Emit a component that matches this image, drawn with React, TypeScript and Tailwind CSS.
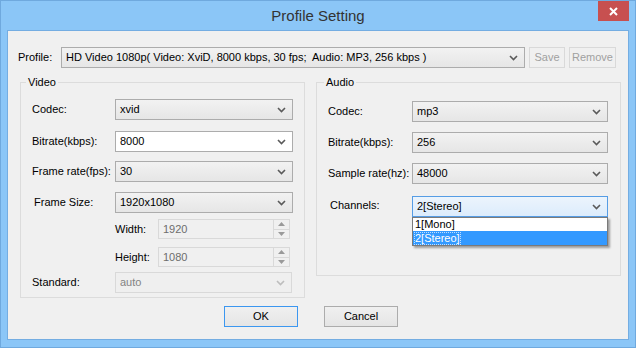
import React from 'react';

const font = { fontFamily: '"Liberation Sans", Arial, sans-serif' };

const Chevron: React.FC<{ color?: string }> = ({ color = '#5a5a5a' }) => (
  <svg width="9" height="6" viewBox="0 0 9 6">
    <path d="M1 1 L4.5 4.5 L8 1" fill="none" stroke={color} strokeWidth="1.6" />
  </svg>
);

type Variant = 'list' | 'edit' | 'disabled' | 'focus';

const Combo: React.FC<{ value: string; variant?: Variant; className?: string }> = ({
  value,
  variant = 'list',
  className = '',
}) => {
  const styles: Record<Variant, string> = {
    list: 'border-[#acacac] bg-gradient-to-b from-[#f2f2f2] to-[#e6e6e6] text-black',
    edit: 'border-[#acacac] bg-white text-black',
    disabled: 'border-[#d9d9d9] bg-[#efefef] text-[#838383]',
    focus: 'border-[#569de5] bg-gradient-to-b from-[#ecf4fc] to-[#dcecfc] text-black',
  };
  return (
    <div className={`flex items-center justify-between border pl-[4px] pr-[6px] ${styles[variant]} ${className}`}>
      <span className="whitespace-pre text-[11px] leading-none">{value}</span>
      <Chevron color={variant === 'disabled' ? '#bdbdbd' : '#5a5a5a'} />
    </div>
  );
};

const Spin: React.FC<{ value: string }> = ({ value }) => (
  <div className="flex h-[20px] w-[132px] items-stretch border border-[#d9d9d9] bg-[#f0f0f0]">
    <span className="flex flex-1 items-center pl-[4px] text-[11px] leading-none text-[#6d6d6d]">{value}</span>
    <div className="flex w-[16px] flex-col border-l border-[#d9d9d9]">
      <div className="flex flex-1 items-center justify-center border-b border-[#d9d9d9]">
        <svg width="7" height="4" viewBox="0 0 7 4">
          <path d="M0 4 L3.5 0 L7 4 Z" fill="#9a9a9a" />
        </svg>
      </div>
      <div className="flex flex-1 items-center justify-center">
        <svg width="7" height="4" viewBox="0 0 7 4">
          <path d="M0 0 L3.5 4 L7 0 Z" fill="#9a9a9a" />
        </svg>
      </div>
    </div>
  </div>
);

const Label: React.FC<{ children: React.ReactNode; className?: string }> = ({ children, className = '' }) => (
  <span className={`text-[11px] leading-none text-black ${className}`}>{children}</span>
);

export default function App() {
  return (
    <div className="flex h-[348px] w-[636px] flex-col border border-[#6fa9de] bg-[#8bc6f7]" style={font}>
      {/* title bar */}
      <div className="relative flex h-[29px] shrink-0 items-center justify-center">
        <span className="text-[15px] text-[#333] pt-[2px]">Profile Setting</span>
        <div className="absolute right-[6px] top-0 flex h-[20px] w-[31px] items-center justify-center bg-[#c75050]">
          <svg width="9" height="9" viewBox="0 0 9 9">
            <path d="M1 1 L8 8 M8 1 L1 8" stroke="#fff" strokeWidth="2" />
          </svg>
        </div>
      </div>

      {/* client area */}
      <div className="mx-[6px] flex h-[310px] flex-col border border-[#74ade2] bg-[#f0f0f0]">
        {/* profile row */}
        <div className="mt-[16px] flex h-[21px] items-center">
          <Label className="ml-[10px] w-[43px]">Profile:</Label>
          <Combo
            variant="list"
            className="h-[21px] w-[464px]"
            value="HD Video 1080p( Video: XviD, 8000 kbps, 30 fps;  Audio: MP3, 256 kbps )"
          />
          <div className="ml-[4px] flex h-[21px] w-[36px] items-center justify-center border border-[#d9d9d9] text-[11px] text-[#a0a0a0]">
            Save
          </div>
          <div className="ml-[4px] flex h-[21px] w-[47px] items-center justify-center border border-[#d9d9d9] text-[11px] text-[#a0a0a0]">
            Remove
          </div>
        </div>

        {/* groups */}
        <div className="mt-[7px] flex items-start gap-[11px] pl-[12px]">
          <fieldset className="h-[223px] w-[283px] border border-[#dcdcdc] px-[11px] pt-[10px]">
            <legend className="-ml-[6px] px-[2px] text-[11px] leading-[14px] text-black">Video</legend>
            <div className="flex h-[21px] items-center">
              <Label className="w-[83px]">Codec:</Label>
              <Combo value="xvid" className="h-[21px] w-[178px]" />
            </div>
            <div className="mt-[11px] flex h-[21px] items-center">
              <Label className="w-[83px]">Bitrate(kbps):</Label>
              <Combo value="8000" variant="edit" className="h-[21px] w-[178px]" />
            </div>
            <div className="mt-[9px] flex h-[21px] items-center">
              <Label className="w-[83px]">Frame rate(fps):</Label>
              <Combo value="30" className="h-[21px] w-[178px]" />
            </div>
            <div className="mt-[10px] flex h-[21px] items-center">
              <Label className="w-[83px] pl-[2px]">Frame Size:</Label>
              <Combo value="1920x1080" className="h-[21px] w-[178px]" />
            </div>
            <div className="mt-[6px] flex h-[20px] items-center pl-[83px]">
              <Label className="w-[43px]">Width:</Label>
              <Spin value="1920" />
            </div>
            <div className="mt-[8px] flex h-[20px] items-center pl-[83px]">
              <Label className="w-[43px]">Height:</Label>
              <Spin value="1080" />
            </div>
            <div className="mt-[5px] flex h-[21px] items-center">
              <Label className="w-[83px]">Standard:</Label>
              <Combo value="auto" variant="disabled" className="h-[21px] w-[177px]" />
            </div>
          </fieldset>

          <fieldset className="h-[201px] w-[305px] border border-[#dcdcdc] px-[11px] pt-[12px]">
            <legend className="-ml-[4px] px-[2px] text-[11px] leading-[14px] text-black">Audio</legend>
            <div className="flex h-[21px] items-center">
              <Label className="w-[84px]">Codec:</Label>
              <Combo value="mp3" className="h-[21px] w-[196px]" />
            </div>
            <div className="mt-[10px] flex h-[21px] items-center">
              <Label className="w-[84px]">Bitrate(kbps):</Label>
              <Combo value="256" className="h-[21px] w-[196px]" />
            </div>
            <div className="mt-[10px] flex h-[21px] items-center">
              <Label className="w-[84px]">Sample rate(hz):</Label>
              <Combo value="48000" className="h-[21px] w-[196px]" />
            </div>
            <div className="relative mt-[12px] flex h-[21px] items-center">
              <Label className="w-[84px] pl-[2px] -mt-[3px]">Channels:</Label>
              <Combo value="2[Stereo]" variant="focus" className="h-[21px] w-[196px]" />
              {/* open dropdown */}
              <div className="absolute left-[84px] top-[21px] w-[196px] border border-[#7a7a7a] bg-white shadow-[2px_2px_2px_rgba(0,0,0,0.35)]">
                <div className="flex h-[13px] items-center pl-[2px] text-[11px] leading-none text-black">1[Mono]</div>
                <div className="flex h-[14px] items-center bg-[#3399ff] pl-[2px] text-[11px] leading-none text-white">
                  <span className="outline outline-1 outline-dotted outline-white/70">2[Stereo]</span>
                </div>
              </div>
            </div>
          </fieldset>
        </div>

        {/* buttons */}
        <div className="mt-[8px] flex gap-[26px] pl-[216px]">
          <div className="flex h-[21px] w-[74px] items-center justify-center border border-[#3c97f0] bg-gradient-to-b from-[#f0f0f0] to-[#e5e5e5] text-[11px] text-black">
            OK
          </div>
          <div className="flex h-[21px] w-[74px] items-center justify-center border border-[#acacac] bg-gradient-to-b from-[#f0f0f0] to-[#e5e5e5] text-[11px] text-black">
            Cancel
          </div>
        </div>
      </div>
    </div>
  );
}
